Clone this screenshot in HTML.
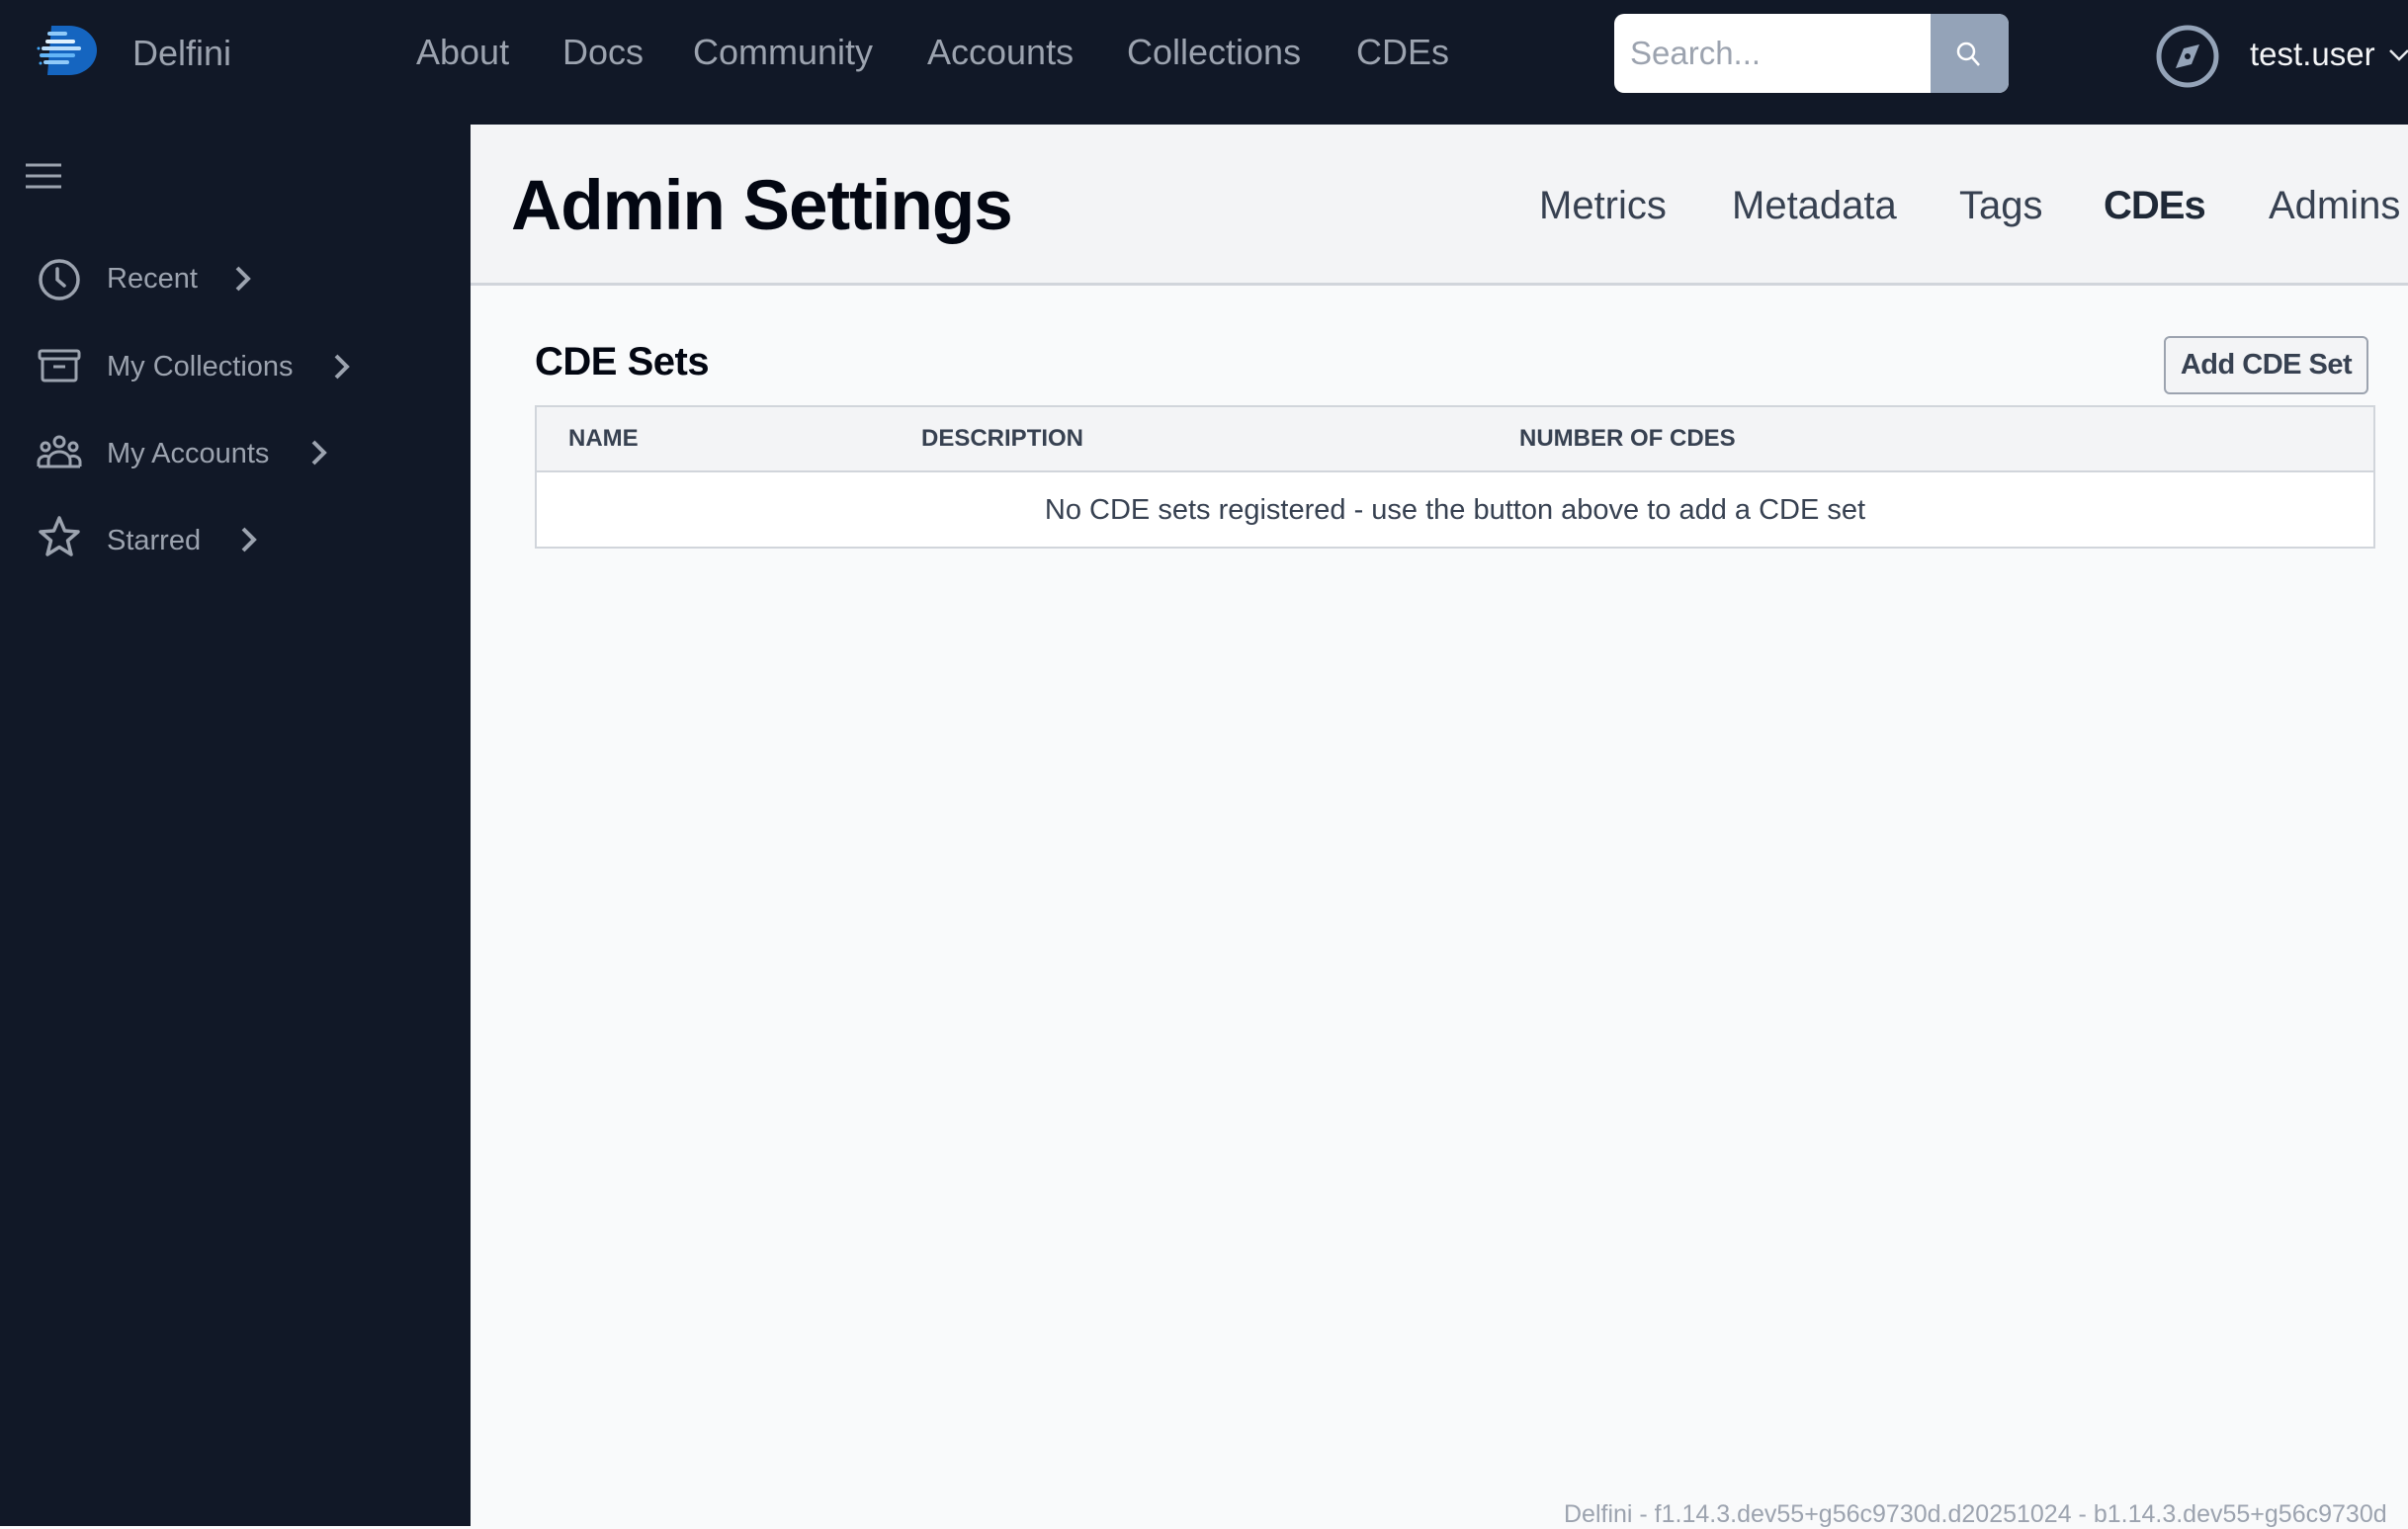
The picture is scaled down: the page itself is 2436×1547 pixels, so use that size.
<!DOCTYPE html>
<html><head><meta charset="utf-8"><style>
*{box-sizing:border-box;margin:0;padding:0}
body{width:2436px;height:1544px;overflow:hidden;background:#f9fafb;font-family:"Liberation Sans",sans-serif;position:relative}
.hdr{position:absolute;left:0;top:0;width:2436px;height:126px;background:#111827}
.side{position:absolute;left:0;top:126px;width:476px;height:1418px;background:#111827}
.t{position:absolute;white-space:nowrap}
.nav{color:#9ca3af;font-size:36px;top:32px}
.titlebar{position:absolute;left:476px;top:126px;width:1960px;height:163px;background:#f3f4f6;border-bottom:3px solid #d1d5db}
.tab{color:#374151;font-size:40px;top:186px}
.si{color:#9ca3af;font-size:29px}
.th{color:#374151;font-size:24px;font-weight:bold;top:430px}
</style></head><body>
<div class="hdr"></div>
<div class="side"></div>
<svg class="t" style="left:36px;top:24px" width="64" height="54" viewBox="0 0 64 54">
<path d="M16 2 H34 A28 25 0 0 1 34 52 H12 Z" fill="#1565c0"/>
<g stroke-linecap="round" stroke-width="4">
<line x1="14" y1="10" x2="30" y2="10" stroke="#90caf9"/>
<line x1="12" y1="18" x2="38" y2="18" stroke="#e3f2fd"/>
<line x1="8" y1="25" x2="44" y2="25" stroke="#bbdefb"/>
<line x1="6" y1="32" x2="38" y2="32" stroke="#64b5f6"/>
<line x1="10" y1="39" x2="32" y2="39" stroke="#90caf9"/>
<circle cx="3" cy="25" r="1.5" fill="#42a5f5" stroke="none"/>
<circle cx="5" cy="40" r="1.5" fill="#42a5f5" stroke="none"/>
</g></svg>
<div class="t" style="left:134px;top:33px;color:#9ca3af;font-size:36px">Delfini</div>
<div class="t nav" style="left:421px">About</div>
<div class="t nav" style="left:569px">Docs</div>
<div class="t nav" style="left:701px">Community</div>
<div class="t nav" style="left:938px">Accounts</div>
<div class="t nav" style="left:1140px">Collections</div>
<div class="t nav" style="left:1372px">CDEs</div>
<div class="t" style="left:1633px;top:14px;width:399px;height:80px;background:#fff;border-radius:10px;overflow:hidden">
<div class="t" style="left:16px;top:21px;color:#9ca3af;font-size:33px">Search...</div>
<div class="t" style="left:320px;top:0;width:79px;height:80px;background:#94a3b8"></div>
<svg class="t" style="left:344px;top:26px" width="30" height="30" viewBox="0 0 30 30"><circle cx="12" cy="12" r="8" fill="none" stroke="#fff" stroke-width="2.5"/><line x1="18" y1="18" x2="25" y2="26" stroke="#fff" stroke-width="2.5"/></svg>
</div>
<svg class="t" style="left:2180px;top:24px" width="66" height="66" viewBox="0 0 66 66"><circle cx="33" cy="33" r="29" fill="none" stroke="#94a3b8" stroke-width="5"/><path d="M45 21 L37 41 L21 45 L29 25 Z" fill="#94a3b8"/><circle cx="33" cy="33" r="3" fill="#111827"/></svg>
<div class="t" style="left:2276px;top:36px;color:#f3f4f6;font-size:33px">test.user</div>
<svg class="t" style="left:2416px;top:48px" width="22" height="16" viewBox="0 0 22 16"><path d="M2 3 L11 12 L20 3" fill="none" stroke="#e5e7eb" stroke-width="2.5"/></svg>
<svg class="t" style="left:26px;top:164px" width="38" height="28"><g stroke="#9ca3af" stroke-width="3"><line x1="0" y1="3" x2="36" y2="3"/><line x1="0" y1="14" x2="36" y2="14"/><line x1="0" y1="25" x2="36" y2="25"/></g></svg>
<svg class="t" style="left:38px;top:261px" width="44" height="44" viewBox="0 0 44 44"><circle cx="22" cy="22" r="19" fill="none" stroke="#9ca3af" stroke-width="3.5"/><path d="M20 11 V22 L27 28" fill="none" stroke="#9ca3af" stroke-width="3.5" stroke-linecap="round"/></svg>
<div class="t si" style="left:108px;top:266px">Recent</div>
<svg class="t" style="left:236px;top:268px" width="20" height="28"><path d="M4 3 L15 14 L4 25" fill="none" stroke="#9ca3af" stroke-width="4"/></svg>
<svg class="t" style="left:38px;top:353px" width="44" height="34" viewBox="0 0 44 34"><rect x="2" y="2" width="40" height="8" rx="2" fill="none" stroke="#9ca3af" stroke-width="3"/><path d="M5 10 V30 a2 2 0 0 0 2 2 H37 a2 2 0 0 0 2-2 V10" fill="none" stroke="#9ca3af" stroke-width="3"/><line x1="16" y1="18" x2="28" y2="18" stroke="#9ca3af" stroke-width="3"/></svg>
<div class="t si" style="left:108px;top:355px">My Collections</div>
<svg class="t" style="left:336px;top:357px" width="20" height="28"><path d="M4 3 L15 14 L4 25" fill="none" stroke="#9ca3af" stroke-width="4"/></svg>
<svg class="t" style="left:37px;top:440px" width="46" height="34" viewBox="0 0 46 34"><g fill="none" stroke="#9ca3af" stroke-width="3"><circle cx="23" cy="7" r="5"/><circle cx="9" cy="12" r="4"/><circle cx="37" cy="12" r="4"/><path d="M12 32 V26 a11 9 0 0 1 22 0 V32 Z"/><path d="M2 32 V27 a7 6 0 0 1 10 -5"/><path d="M44 32 V27 a7 6 0 0 0 -10 -5"/><line x1="2" y1="32" x2="44" y2="32"/></g></svg>
<div class="t si" style="left:108px;top:443px">My Accounts</div>
<svg class="t" style="left:313px;top:444px" width="20" height="28"><path d="M4 3 L15 14 L4 25" fill="none" stroke="#9ca3af" stroke-width="4"/></svg>
<svg class="t" style="left:37px;top:521px" width="46" height="46" viewBox="0 0 46 46"><path d="M23 3 L28.5 16 L42 17 L31.5 26 L35 40 L23 32.5 L11 40 L14.5 26 L4 17 L17.5 16 Z" fill="none" stroke="#9ca3af" stroke-width="3.5" stroke-linejoin="round"/></svg>
<div class="t si" style="left:108px;top:531px">Starred</div>
<svg class="t" style="left:242px;top:532px" width="20" height="28"><path d="M4 3 L15 14 L4 25" fill="none" stroke="#9ca3af" stroke-width="4"/></svg>
<div class="titlebar"></div>
<div class="t" style="left:517px;top:168px;color:#030712;font-size:71px;font-weight:bold;letter-spacing:-1px">Admin Settings</div>
<div class="t tab" style="left:1557px">Metrics</div>
<div class="t tab" style="left:1752px">Metadata</div>
<div class="t tab" style="left:1982px">Tags</div>
<div class="t tab" style="left:2128px;font-weight:bold;color:#1f2937;letter-spacing:-1px">CDEs</div>
<div class="t tab" style="left:2295px">Admins</div>
<div class="t" style="left:541px;top:344px;color:#030712;font-size:40px;font-weight:bold;letter-spacing:-0.5px">CDE Sets</div>
<div class="t" style="left:2189px;top:340px;width:207px;height:59px;border:2px solid #9ca3af;border-radius:6px;background:#f3f4f6;color:#374151;font-size:29px;font-weight:bold;text-align:center;line-height:55px;letter-spacing:-0.5px">Add CDE Set</div>
<div class="t" style="left:541px;top:410px;width:1862px;height:145px;border:2px solid #d1d5db;background:#fff">
<div style="height:66px;background:#f3f4f6;border-bottom:2px solid #d1d5db"></div>
</div>
<div class="t th" style="left:575px">NAME</div>
<div class="t th" style="left:932px">DESCRIPTION</div>
<div class="t th" style="left:1537px">NUMBER OF CDES</div>
<div class="t" style="left:541px;width:1862px;top:500px;text-align:center;color:#374151;font-size:29px">No CDE sets registered - use the button above to add a CDE set</div>
<div class="t" style="left:1582px;top:1518px;color:#9ca3af;font-size:25px">Delfini - f1.14.3.dev55+g56c9730d.d20251024 - b1.14.3.dev55+g56c9730d</div>
</body></html>
